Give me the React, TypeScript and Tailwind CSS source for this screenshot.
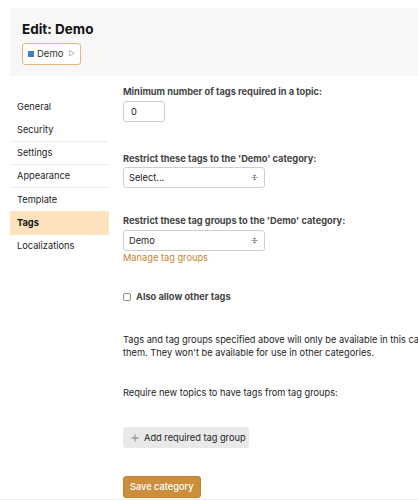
import React from 'react'

const SortIcon = () => (
  <svg width="7" height="7" viewBox="0 0 7 7" className="text-[#9a9a9a]">
    <path d="M3.5 0.5v6M0.5 3.5h6M2 1.5h3M2 5.5h3" stroke="currentColor" strokeWidth="1" fill="none" />
  </svg>
)

const PlusIcon = () => (
  <svg width="8" height="8" viewBox="0 0 8 8" className="text-[#9a9a9a]">
    <path d="M4 0.5v7M0.5 4h7" stroke="currentColor" strokeWidth="1.3" fill="none" />
  </svg>
)

export default function App() {
  const nav = [
    { label: 'General', line: false },
    { label: 'Security', line: true },
    { label: 'Settings', line: true },
    { label: 'Appearance', line: true },
    { label: 'Template', line: false },
    { label: 'Tags', active: true, line: false },
    { label: 'Localizations', line: false },
  ]

  return (
    <div
      className="w-[418px] h-[500px] overflow-hidden bg-white text-[#222] border-b border-[#ededed]"
      style={{ fontFamily: 'Inter, "Noto Sans", sans-serif' }}
    >
      {/* Header */}
      <div className="pt-2 pl-[10px]">
        <div className="bg-[#f7f7f7] h-[68px] pl-3 pt-[13px]">
          <h1 className="text-[13.5px] leading-[16px] font-bold text-[#111]">Edit: Demo</h1>
          <div className="mt-[6px] inline-flex items-center h-[22px] px-[5px] gap-[3px] border border-[#e6b77c] rounded-[3px] bg-white">
            <span className="w-[6px] h-[6px] bg-[#3b7fd0]" />
            <span className="text-[9.5px] text-[#333]">Demo</span>
            <span className="text-[7px] text-[#999] ml-[2px]">▷</span>
          </div>
        </div>
      </div>

      <div className="flex pl-[10px] pt-[10px]">
        {/* Sidebar */}
        <ul className="w-[99px] shrink-0 pt-[9px]">
          {nav.map((item) => (
            <li
              key={item.label}
              className={`h-[23.3px] flex items-center pl-[7px] text-[9.25px] ${
                item.active ? 'bg-[#fde2bd] font-bold text-[#111]' : 'text-[#222]'
              } ${item.line ? 'border-b border-[#ececec]' : ''}`}
            >
              {item.label}
            </li>
          ))}
        </ul>

        {/* Content */}
        <div className="ml-[14px] flex-1 text-[9.25px]">
          <label className="block font-bold text-[#444] leading-[12px]">Minimum number of tags required in a topic:</label>
          <div className="mt-[3px] w-[42px] h-[21px] border border-[#cfcfcf] rounded-[3px] flex items-center pl-[7px] text-[#222]">0</div>

          <label className="block mt-[31px] font-bold text-[#444] leading-[12px]">Restrict these tags to the 'Demo' category:</label>
          <div className="mt-[2px] w-[142px] h-[21px] border border-[#cfcfcf] rounded-[3px] flex items-center justify-between pl-[5px] pr-[6px]">
            <span>Select...</span>
            <SortIcon />
          </div>

          <label className="block mt-[27px] font-bold text-[#444] leading-[12px]">Restrict these tag groups to the 'Demo' category:</label>
          <div className="mt-[3px] w-[142px] h-[21px] border border-[#cfcfcf] rounded-[3px] flex items-center justify-between pl-[5px] pr-[6px]">
            <span>Demo</span>
            <SortIcon />
          </div>
          <a className="block mt-[1px] text-[#c8832b] leading-[12px]">Manage tag groups</a>

          <div className="mt-[26px] flex items-center gap-[5px]">
            <span className="w-[8px] h-[8px] border border-[#888] rounded-[2px] bg-white" />
            <span className="font-bold text-[#444]">Also allow other tags</span>
          </div>

          <p className="mt-[30px] leading-[12.7px] whitespace-nowrap text-[#222]">
            Tags and tag groups specified above will only be available in this category and other categories that also specify
            <br />
            them. They won't be available for use in other categories.
          </p>

          <p className="mt-[28px] leading-[12px] text-[#222]">Require new topics to have tags from tag groups:</p>

          <button className="mt-[28px] h-[21px] w-[126px] bg-[#e9e9e9] rounded-[3px] flex items-center pl-[8px] gap-[5px] text-[#222]">
            <PlusIcon />
            <span>Add required tag group</span>
          </button>

          <button className="mt-[28px] h-[22px] px-[6px] bg-[#cd8e3b] border border-[#c0832f] rounded-[3px] text-white font-medium">
            Save category
          </button>
        </div>
      </div>
    </div>
  )
}
